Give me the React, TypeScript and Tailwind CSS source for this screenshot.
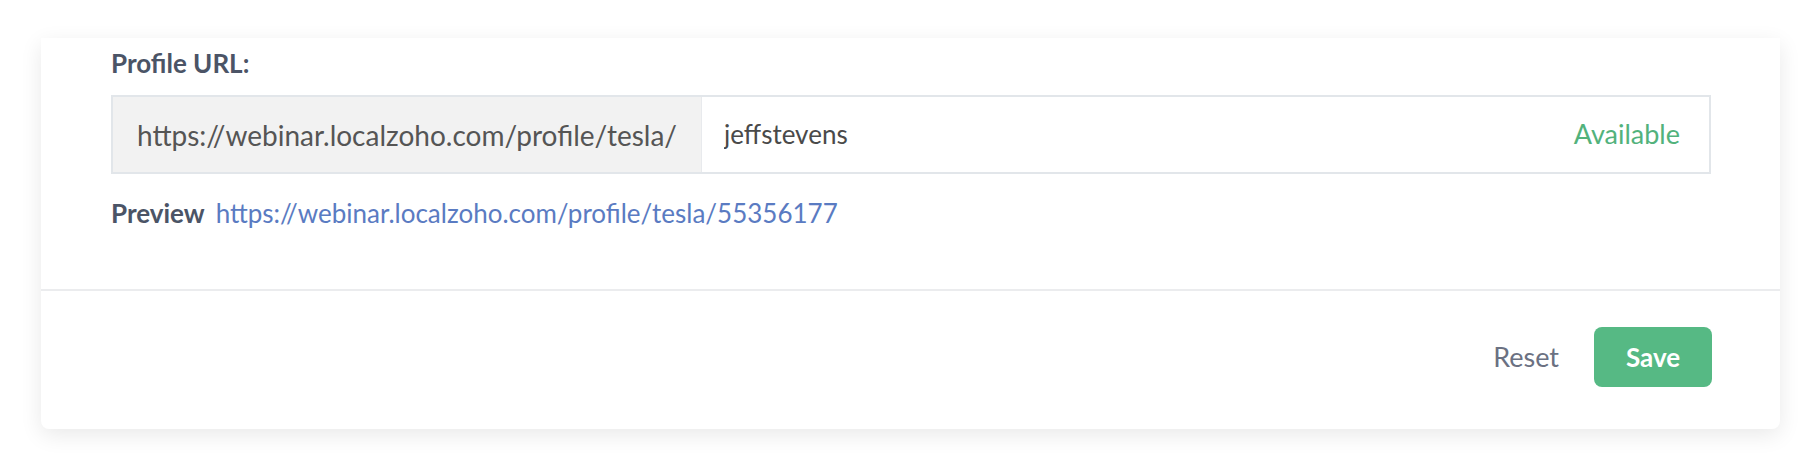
import React, { useState } from 'react'

const BASE = 'https://webinar.localzoho.com/profile/tesla/'

export default function App() {
  const [slug, setSlug] = useState('jeffstevens')

  return (
    <div className="min-h-[468px] bg-white pt-[38px] pl-[41px] pr-[38px] font-['Lato','Noto_Sans',sans-serif]">
      <div className="w-[1739px] rounded-b-[8px] bg-white shadow-[0_6px_22px_rgba(0,0,0,0.09)]">
        {/* form body */}
        <div className="px-[70px] pt-[10px] pb-[61px]">
          <div className="text-[26px] leading-[30px] font-bold text-[#4b5466]">Profile URL:</div>

          <div className="mt-[17px] flex h-[79px] w-[1600px] border-2 border-[#e2e6ea]">
            <div className="flex items-center bg-[#f2f2f2] pl-[24px] pr-[24px] text-[28px] text-[#555555] border-r border-[#e8eaed]">
              {BASE}
            </div>
            <div className="flex flex-1 items-center pl-[22px] pr-[29px]">
              <input
                value={slug}
                onChange={(e) => setSlug(e.target.value)}
                className="flex-1 bg-transparent text-[26px] text-[#4a4a4a] outline-none"
              />
              <span className="text-[27px] text-[#52b27c]">Available</span>
            </div>
          </div>

          <div className="mt-[24px] flex items-baseline gap-[11px] text-[26px] leading-[30px]">
            <span className="font-bold text-[#4b5466]">Preview</span>
            <a className="text-[#5a7bc2]" href="#">
              {BASE}55356177
            </a>
          </div>
        </div>

        {/* footer */}
        <div className="flex items-center justify-end gap-[35px] border-t-2 border-[#ebecee] px-[68px] pt-[36px] pb-[42px]">
          <button className="text-[27px] text-[#6b7182]">Reset</button>
          <button className="h-[60px] w-[118px] rounded-[8px] bg-[#56b984] text-[26px] font-bold text-white">
            Save
          </button>
        </div>
      </div>
    </div>
  )
}
